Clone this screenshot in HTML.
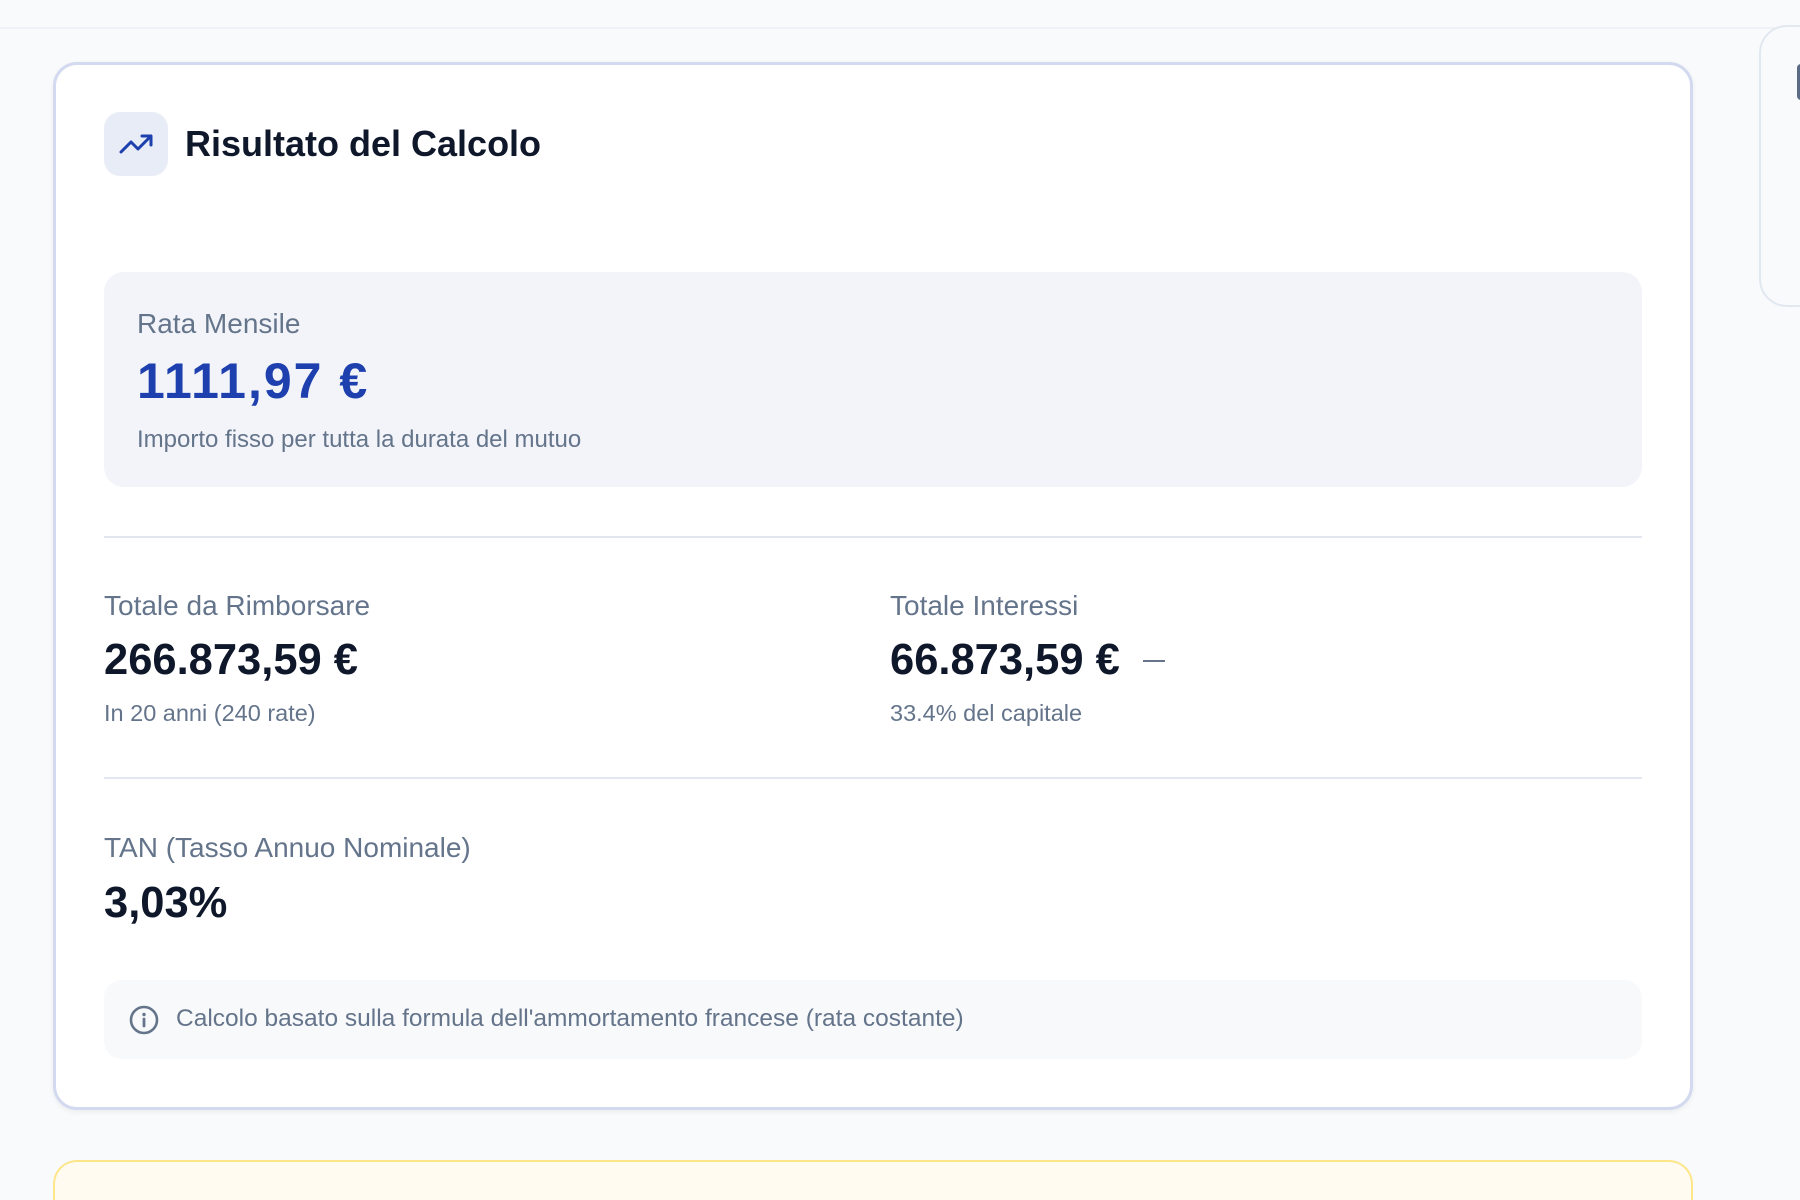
<!DOCTYPE html>
<html style="overflow:hidden;height:1200px"><head><meta charset="utf-8"><style>
*{margin:0;padding:0;box-sizing:border-box}
body{width:1800px;height:1200px;overflow:hidden;background:#f8fafc;font-family:"Liberation Sans",sans-serif;position:relative}
.a{position:absolute;white-space:nowrap}
.lab{color:#64748b;font-size:28px}
.sub{color:#64748b;font-size:23.5px}
.val{color:#0f172a;font-size:43.5px;font-weight:bold}
</style></head><body>
<div class="a" style="left:0;top:0;width:1800px;height:29px;border-bottom:2px solid #eef1f5;background:#f8fafc"></div>
<div class="a" style="left:1759px;top:25px;width:80px;height:282px;border:2px solid #e2e8f0;border-radius:28px;background:#f8fafc"></div>
<div class="a" style="left:1797px;top:64px;width:10px;height:36px;background:#5b6b86;border-radius:4px"></div>
<div class="a" style="left:53px;top:62px;width:1640px;height:1048px;background:#fff;border:3px solid #d3daf0;border-radius:24px;box-shadow:0 2px 6px rgba(0,0,0,0.06)"></div>
<div class="a" style="left:104px;top:112px;width:64px;height:64px;background:#e8ecf7;border-radius:16px"></div>
<svg class="a" style="left:118px;top:130px" width="36" height="26" viewBox="0 0 36 26"><path d="M3 22 L13 12 L20 19 L33 6 M24 6 H33 V15" fill="none" stroke="#1e40af" stroke-width="3" stroke-linecap="round" stroke-linejoin="round"/></svg>
<div class="a" style="left:185px;top:123px;font-size:36px;font-weight:bold;color:#0f172a">Risultato del Calcolo</div>
<div class="a" style="left:104px;top:272px;width:1538px;height:215px;background:#f2f4f9;border-radius:20px"></div>
<div class="a lab" style="left:137px;top:308px">Rata Mensile</div>
<div class="a" style="left:137px;top:352px;font-size:50px;font-weight:bold;color:#1e40af;letter-spacing:2px">1111,97 €</div>
<div class="a sub" style="left:137px;top:426px;font-size:24px">Importo fisso per tutta la durata del mutuo</div>
<div class="a" style="left:104px;top:536px;width:1538px;height:2px;background:#e2e6ee"></div>
<div class="a lab" style="left:104px;top:590px">Totale da Rimborsare</div>
<div class="a val" style="left:104px;top:636px">266.873,59 €</div>
<div class="a sub" style="left:104px;top:700px">In 20 anni (240 rate)</div>
<div class="a lab" style="left:890px;top:590px">Totale Interessi</div>
<div class="a val" style="left:890px;top:636px">66.873,59 €</div>
<div class="a" style="left:1143px;top:660px;width:22px;height:2px;background:#64748b"></div>
<div class="a sub" style="left:890px;top:700px">33.4% del capitale</div>
<div class="a" style="left:104px;top:777px;width:1538px;height:2px;background:#e2e6ee"></div>
<div class="a lab" style="left:104px;top:832px">TAN (Tasso Annuo Nominale)</div>
<div class="a val" style="left:104px;top:879px">3,03%</div>
<div class="a" style="left:104px;top:980px;width:1538px;height:79px;background:#f8f9fb;border-radius:18px"></div>
<svg class="a" style="left:128px;top:1004px" width="32" height="32" viewBox="0 0 32 32"><circle cx="16" cy="16" r="13" fill="none" stroke="#64748b" stroke-width="2.6"/><path d="M16 15v7" stroke="#64748b" stroke-width="2.8" stroke-linecap="round"/><circle cx="16" cy="10.5" r="1.7" fill="#64748b"/></svg>
<div class="a" style="left:176px;top:1005px;font-size:24.5px;color:#64748b">Calcolo basato sulla formula dell'ammortamento francese (rata costante)</div>
<div class="a" style="left:53px;top:1160px;width:1640px;height:40px;background:#fffbf0;border:2px solid #fde68a;border-bottom:none;border-radius:24px 24px 0 0"></div>
</body></html>
